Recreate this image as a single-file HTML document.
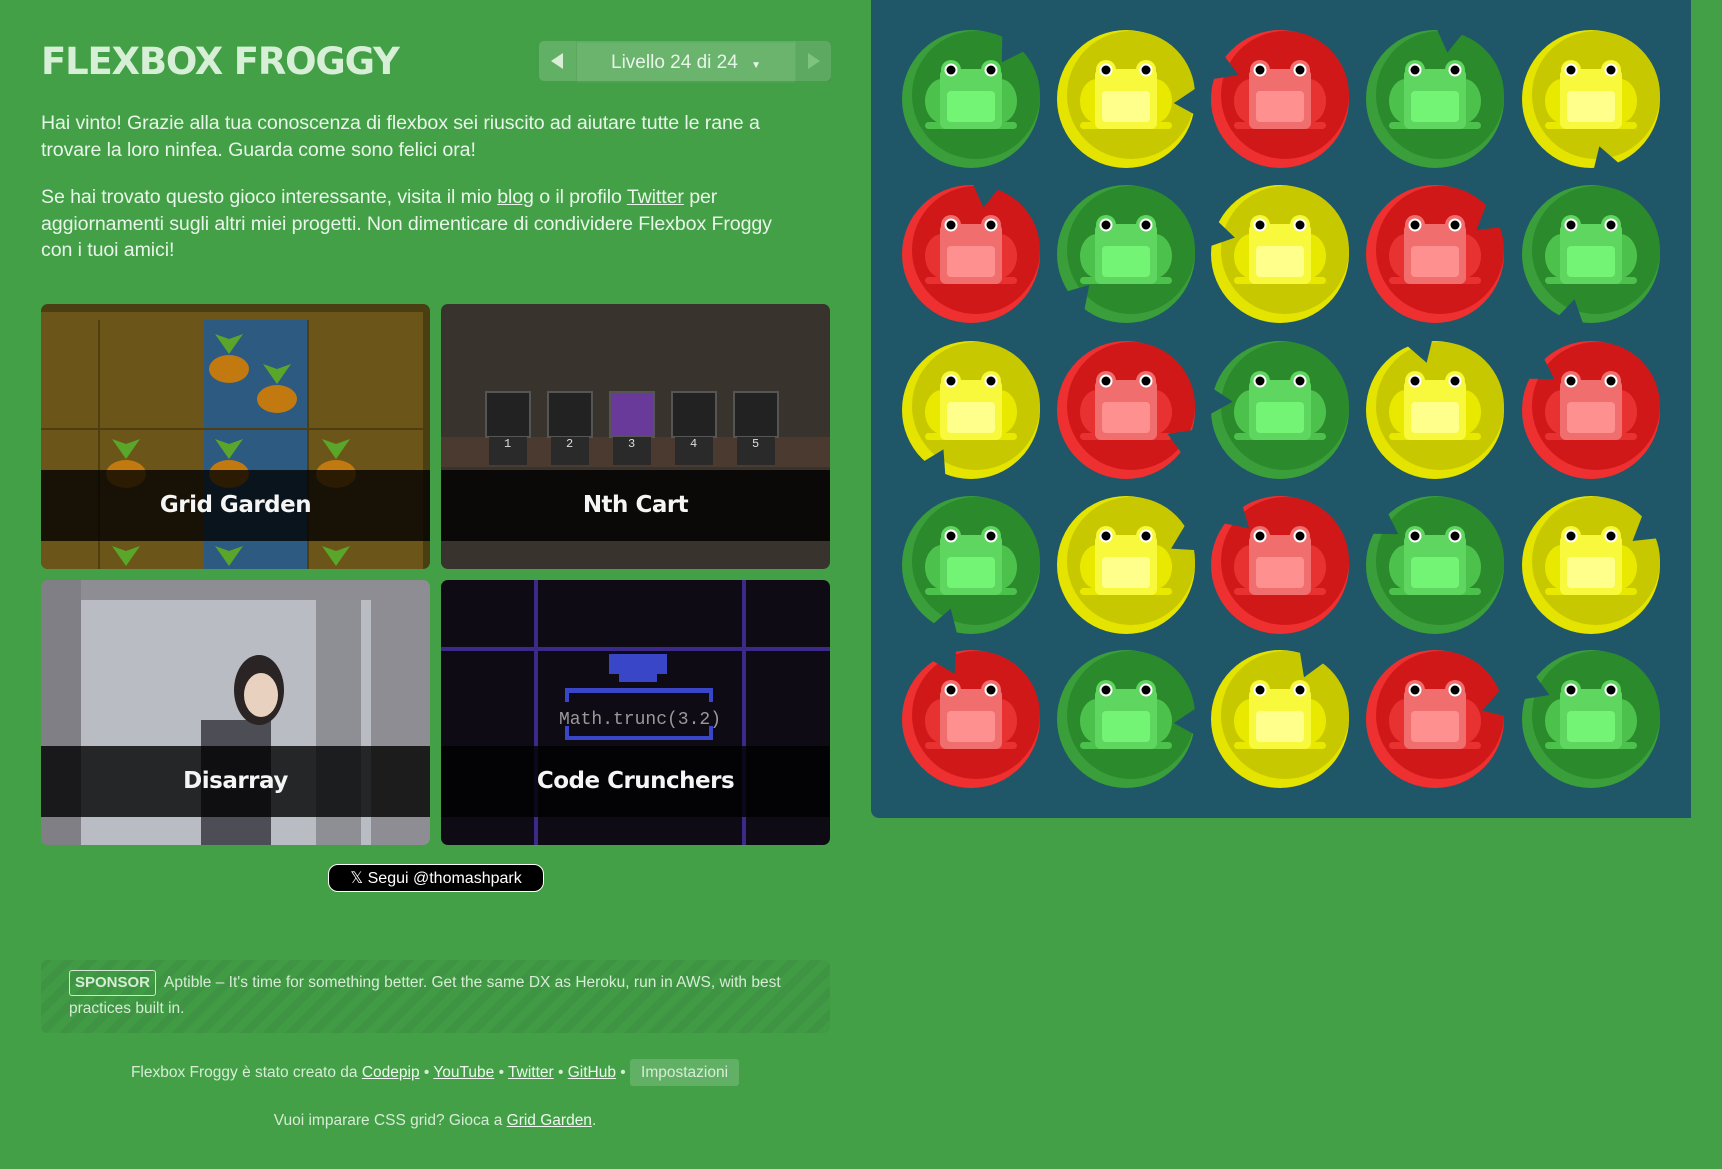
<!DOCTYPE html>
<html><head><meta charset="utf-8">
<style>
html,body{margin:0;padding:0}
body{width:1722px;height:1169px;background:#43a047;position:relative;overflow:hidden;font-family:"Liberation Sans",sans-serif;color:#e8f5e9}
.a{position:absolute}
a{text-decoration:underline}
h1{position:absolute;left:41px;top:40px;margin:0;font-size:37px;font-weight:900;letter-spacing:-1.2px;color:#d7efd6;font-family:"DejaVu Sans","Liberation Sans",sans-serif}
.nav{left:539px;top:41px;width:292px;height:40px;background:rgba(255,255,255,.17);border-radius:5px}
.nav .l{position:absolute;left:0;top:0;width:37px;height:40px;border-right:1px solid rgba(0,0,0,.05)}
.nav .r{position:absolute;right:0;top:0;width:35px;height:40px;background:rgba(0,0,0,.04)}
.nav .m{position:absolute;left:38px;right:36px;top:2px;height:40px;background:rgba(255,255,255,.05);text-align:center;line-height:40px;font-size:19px;color:#e8f5e9}
p{position:absolute;left:41px;width:820px;margin:0;font-size:19.6px;line-height:26.5px;letter-spacing:-.1px}
p a{color:inherit}
.card{position:absolute;width:389px;height:265px;border-radius:7px;overflow:hidden}
.band{position:absolute;left:0;right:0;top:166px;height:71px;background:rgba(0,0,0,.82);color:#f5f5f5;text-align:center;line-height:71px;font-size:23px;font-weight:bold;font-family:"DejaVu Sans",sans-serif;letter-spacing:-.5px}
.tw{left:328px;top:864px;width:216px;height:28px;background:#000;border-radius:10px;color:#fff;font-size:16px;line-height:28px;text-align:center;border:1px solid #fff;box-sizing:border-box}
.sp{left:41px;top:960px;width:789px;height:73px;border-radius:6px;background:repeating-linear-gradient(135deg,rgba(0,0,0,.04) 0 8px,rgba(255,255,255,0) 8px 16px);background-color:rgba(0,0,0,.03);font-size:15.5px;color:#d6ecd5;line-height:25px;box-sizing:border-box;padding:10px 28px}
.sp b{display:inline-block;border:1px solid #cfe8cf;border-radius:3px;padding:0 5px;line-height:24px;margin-right:8px;font-size:15px}
.ft{left:0;width:870px;text-align:center;font-size:15.5px;color:#d6ecd5}
.ft a{color:#eef8ee}
.btn{display:inline-block;background:rgba(255,255,255,.17);border-radius:3px;padding:0 11px;line-height:27px}
.pond{left:871px;top:0;width:820px;height:818px;background:#1f5768;border-radius:0 0 0 8px}
</style></head><body>
<h1>FLEXBOX FROGGY</h1>
<div class="a nav"><div class="l"><svg width="37" height="40"><polygon points="24,12 24,28 12,20" fill="#d8eed7"/></svg></div><div class="m">Livello 24 di 24 <span style="font-size:10px;margin-left:8px">▼</span></div><div class="r"><svg width="35" height="40"><polygon points="12,12 12,28 24,20" fill="#7dc47d"/></svg></div></div>
<p style="top:110px">Hai vinto! Grazie alla tua conoscenza di flexbox sei riuscito ad aiutare tutte le rane a<br>trovare la loro ninfea. Guarda come sono felici ora!</p>
<p style="top:184px">Se hai trovato questo gioco interessante, visita il mio <a>blog</a> o il profilo <a>Twitter</a> per<br>aggiornamenti sugli altri miei progetti. Non dimenticare di condividere Flexbox Froggy<br>con i tuoi amici!</p>

<div class="card" style="left:41px;top:304px;background:#4a3f12">
<svg width="389" height="265" style="position:absolute;left:0;top:0">
<rect x="0" y="8" width="382" height="257" fill="#6b5518"/>
<rect x="163" y="16" width="104" height="249" fill="#2d5a80"/>
<g stroke="#4e3e10" stroke-width="2"><line x1="58" y1="16" x2="58" y2="265"/><line x1="267" y1="16" x2="267" y2="265"/><line x1="0" y1="125" x2="382" y2="125"/></g>
<g fill="#c27a10"><ellipse cx="188" cy="65" rx="20" ry="14"/><ellipse cx="236" cy="95" rx="20" ry="14"/><ellipse cx="85" cy="170" rx="20" ry="14"/><ellipse cx="188" cy="170" rx="20" ry="14"/><ellipse cx="295" cy="170" rx="20" ry="14"/></g>
<g fill="#5aa62a"><path d="M188 50 l-14 -20 l14 5 l14 -5z"/><path d="M236 80 l-14 -20 l14 5 l14 -5z"/><path d="M85 155 l-14 -20 l14 5 l14 -5z"/><path d="M188 155 l-14 -20 l14 5 l14 -5z"/><path d="M295 155 l-14 -20 l14 5 l14 -5z"/><path d="M85 262 l-14 -20 l14 5 l14 -5z"/><path d="M188 262 l-14 -20 l14 5 l14 -5z"/><path d="M295 262 l-14 -20 l14 5 l14 -5z"/></g>
</svg><div class="band" style="background:rgba(0,0,0,.78)">Grid Garden</div></div>

<div class="card" style="left:441px;top:304px;background:#38332c">
<svg width="389" height="265" style="position:absolute;left:0;top:0">
<rect x="0" y="133" width="389" height="30" fill="#4a3a30"/>
<g fill="#222" stroke="#555" stroke-width="2">
<rect x="45" y="88" width="44" height="45"/><rect x="107" y="88" width="44" height="45"/><rect x="169" y="88" width="44" height="45" fill="#6a3a9a"/><rect x="231" y="88" width="44" height="45"/><rect x="293" y="88" width="44" height="45"/></g>
<g fill="#2a2a2a"><rect x="48" y="133" width="38" height="28"/><rect x="110" y="133" width="38" height="28"/><rect x="172" y="133" width="38" height="28"/><rect x="234" y="133" width="38" height="28"/><rect x="296" y="133" width="38" height="28"/></g>
<g fill="#ddd" font-size="12" font-family="Liberation Mono"><text x="63" y="143">1</text><text x="125" y="143">2</text><text x="187" y="143">3</text><text x="249" y="143">4</text><text x="311" y="143">5</text></g>
</svg><div class="band">Nth Cart</div></div>

<div class="card" style="left:41px;top:580px;background:#8e8d93">
<svg width="389" height="265" style="position:absolute;left:0;top:0">
<rect x="40" y="20" width="290" height="245" fill="#b9bcc2"/>
<rect x="0" y="0" width="40" height="265" fill="#7f7f85"/>
<rect x="275" y="20" width="45" height="245" fill="#8e8f95"/>
<rect x="160" y="140" width="70" height="125" fill="#4d4d55"/>
<ellipse cx="218" cy="110" rx="25" ry="35" fill="#2a2424"/>
<ellipse cx="220" cy="115" rx="17" ry="22" fill="#e9d1c0"/>
</svg><div class="band" style="background:rgba(0,0,0,.8)">Disarray</div></div>

<div class="card" style="left:441px;top:580px;background:#0f0b14">
<svg width="389" height="265" style="position:absolute;left:0;top:0">
<g stroke="#3b2a8a" stroke-width="4"><line x1="95" y1="0" x2="95" y2="265"/><line x1="303" y1="0" x2="303" y2="265"/><line x1="0" y1="69" x2="389" y2="69"/></g>
<rect x="168" y="74" width="58" height="20" fill="#3a46c8"/><rect x="178" y="94" width="38" height="8" fill="#3a46c8"/>
<rect x="124" y="108" width="148" height="5" fill="#3a46c8"/>
<path d="M126 112v10M270 112v10M126 146v12h144v-12" stroke="#3a46c8" stroke-width="4" fill="none"/>
<text x="199" y="144" text-anchor="middle" fill="#999" font-family="Liberation Mono" font-size="18">Math.trunc(3.2)</text>
</svg><div class="band" style="background:rgba(0,0,0,.8)">Code Crunchers</div></div>

<div class="a tw">𝕏 Segui @thomashpark</div>
<div class="a sp"><b>SPONSOR</b>Aptible – It's time for something better. Get the same DX as Heroku, run in AWS, with best practices built in.</div>
<div class="a ft" style="top:1059px;line-height:27px">Flexbox Froggy è stato creato da <a>Codepip</a> • <a>YouTube</a> • <a>Twitter</a> • <a>GitHub</a> • <span class="btn">Impostazioni</span></div>
<div class="a ft" style="top:1112px">Vuoi imparare CSS grid? Gioca a <a>Grid Garden</a>.</div>

<div class="a pond"></div>
<svg class="a" style="left:0;top:0" width="1722" height="1169">
<defs>
<g id="f">
<circle r="69" fill="var(--rim)"/>
<circle cx="5" cy="-4" r="64" fill="var(--pad)"/>
<ellipse cx="-29" cy="2" rx="17" ry="22" fill="var(--leg)"/>
<ellipse cx="29" cy="2" rx="17" ry="22" fill="var(--leg)"/>
<rect x="-46" y="23" width="92" height="7" rx="3.5" fill="var(--leg)"/>
<circle cx="-20" cy="-29" r="10" fill="var(--body)"/><circle cx="20" cy="-29" r="10" fill="var(--body)"/>
<rect x="-31" y="-30" width="62" height="60" rx="6" fill="var(--body)"/>
<rect x="-24" y="-8" width="48" height="31" rx="4" fill="var(--belly)"/>
<circle cx="-20" cy="-29" r="6.5" fill="#fff"/><circle cx="20" cy="-29" r="6.5" fill="#fff"/>
<circle cx="-20" cy="-29" r="4.5" fill="#000"/><circle cx="20" cy="-29" r="4.5" fill="#000"/>
</g>
<polygon id="n" points="48,0 80,-26 80,14" fill="#1f5768"/>
</defs>
<style>
.G{--rim:#3a9e3a;--pad:#2b8a2b;--leg:#4cc24c;--body:#5fd65f;--belly:#74f474}
.Y{--rim:#e4e400;--pad:#c8c800;--leg:#e9e900;--body:#f8f83c;--belly:#ffff8c}
.R{--rim:#ee3030;--pad:#d11818;--leg:#e83232;--body:#f06e6e;--belly:#ff9090}
</style>
<g class="G" transform="translate(971,99)"><use href="#f"/><use href="#n" transform="rotate(-50)"/></g>
<g class="Y" transform="translate(1126,99)"><use href="#f"/><use href="#n" transform="rotate(5)"/></g>
<g class="R" transform="translate(1280,99)"><use href="#f"/><use href="#n" transform="rotate(-150)"/></g>
<g class="G" transform="translate(1435,99)"><use href="#f"/><use href="#n" transform="rotate(-75)"/></g>
<g class="Y" transform="translate(1591,99)"><use href="#f"/><use href="#n" transform="rotate(80)"/></g>
<g class="R" transform="translate(971,254)"><use href="#f"/><use href="#n" transform="rotate(-75)"/></g>
<g class="G" transform="translate(1126,254)"><use href="#f"/><use href="#n" transform="rotate(140)"/></g>
<g class="Y" transform="translate(1280,254)"><use href="#f"/><use href="#n" transform="rotate(-160)"/></g>
<g class="R" transform="translate(1435,254)"><use href="#f"/><use href="#n" transform="rotate(-30)"/></g>
<g class="G" transform="translate(1591,254)"><use href="#f"/><use href="#n" transform="rotate(110)"/></g>
<g class="Y" transform="translate(971,410)"><use href="#f"/><use href="#n" transform="rotate(125)"/></g>
<g class="R" transform="translate(1126,410)"><use href="#f"/><use href="#n" transform="rotate(30)"/></g>
<g class="G" transform="translate(1280,410)"><use href="#f"/><use href="#n" transform="rotate(-170)"/></g>
<g class="Y" transform="translate(1435,410)"><use href="#f"/><use href="#n" transform="rotate(-100)"/></g>
<g class="R" transform="translate(1591,410)"><use href="#f"/><use href="#n" transform="rotate(-140)"/></g>
<g class="G" transform="translate(971,565)"><use href="#f"/><use href="#n" transform="rotate(115)"/></g>
<g class="Y" transform="translate(1126,565)"><use href="#f"/><use href="#n" transform="rotate(-20)"/></g>
<g class="R" transform="translate(1280,565)"><use href="#f"/><use href="#n" transform="rotate(-130)"/></g>
<g class="G" transform="translate(1435,565)"><use href="#f"/><use href="#n" transform="rotate(-140)"/></g>
<g class="Y" transform="translate(1591,565)"><use href="#f"/><use href="#n" transform="rotate(-30)"/></g>
<g class="R" transform="translate(971,719)"><use href="#f"/><use href="#n" transform="rotate(-110)"/></g>
<g class="G" transform="translate(1126,719)"><use href="#f"/><use href="#n" transform="rotate(5)"/></g>
<g class="Y" transform="translate(1280,719)"><use href="#f"/><use href="#n" transform="rotate(-60)"/></g>
<g class="R" transform="translate(1435,719)"><use href="#f"/><use href="#n" transform="rotate(-10)"/></g>
<g class="G" transform="translate(1591,719)"><use href="#f"/><use href="#n" transform="rotate(-150)"/></g>
</svg>
</body></html>
